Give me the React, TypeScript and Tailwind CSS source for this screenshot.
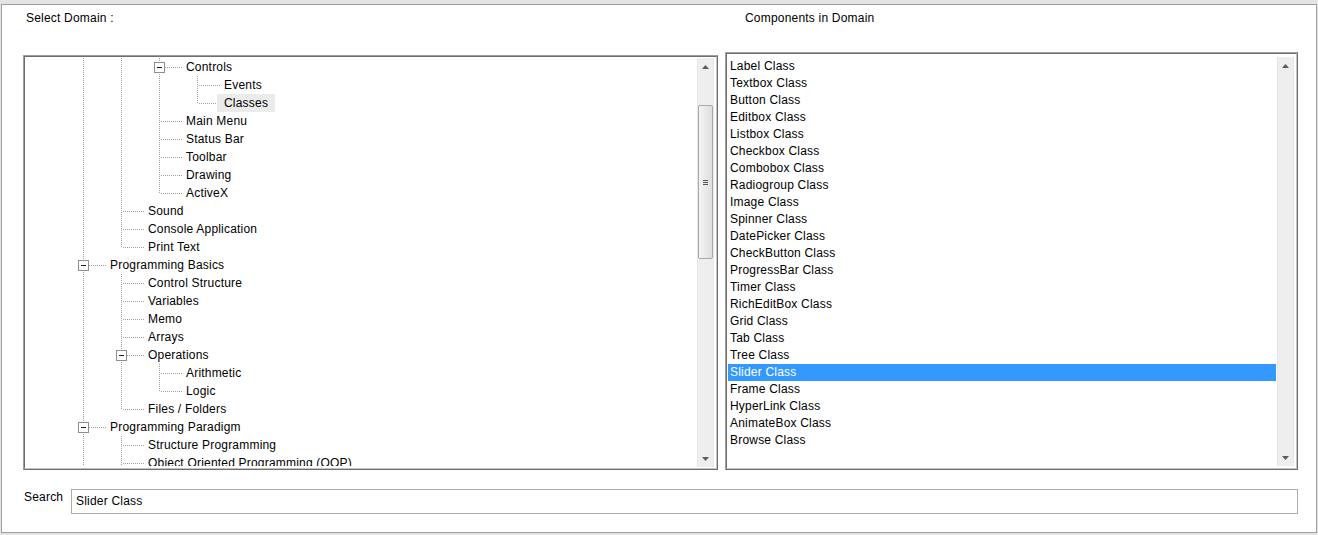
import React from "react";

type TreeRow = {
  text: string;
  conn: number;
  anc: boolean[];
  last?: boolean;
  box?: boolean;
  sel?: boolean;
};

const F = [true];
const FF = [true, true];
const FFF = [true, true, true];

const treeRows: TreeRow[] = [
  { text: "Controls", conn: 2, anc: FF, box: true },
  { text: "Events", conn: 3, anc: FFF },
  { text: "Classes", conn: 3, anc: FFF, last: true, sel: true },
  { text: "Main Menu", conn: 2, anc: FF },
  { text: "Status Bar", conn: 2, anc: FF },
  { text: "Toolbar", conn: 2, anc: FF },
  { text: "Drawing", conn: 2, anc: FF },
  { text: "ActiveX", conn: 2, anc: FF, last: true },
  { text: "Sound", conn: 1, anc: F },
  { text: "Console Application", conn: 1, anc: F },
  { text: "Print Text", conn: 1, anc: F, last: true },
  { text: "Programming Basics", conn: 0, anc: [], box: true },
  { text: "Control Structure", conn: 1, anc: F },
  { text: "Variables", conn: 1, anc: F },
  { text: "Memo", conn: 1, anc: F },
  { text: "Arrays", conn: 1, anc: F },
  { text: "Operations", conn: 1, anc: F, box: true },
  { text: "Arithmetic", conn: 2, anc: FF },
  { text: "Logic", conn: 2, anc: FF, last: true },
  { text: "Files / Folders", conn: 1, anc: F, last: true },
  { text: "Programming Paradigm", conn: 0, anc: [], box: true },
  { text: "Structure Programming", conn: 1, anc: F },
  { text: "Object Oriented Programming (OOP)", conn: 1, anc: F },
];

const listItems = [
  "Label Class",
  "Textbox Class",
  "Button Class",
  "Editbox Class",
  "Listbox Class",
  "Checkbox Class",
  "Combobox Class",
  "Radiogroup Class",
  "Image Class",
  "Spinner Class",
  "DatePicker Class",
  "CheckButton Class",
  "ProgressBar Class",
  "Timer Class",
  "RichEditBox Class",
  "Grid Class",
  "Tab Class",
  "Tree Class",
  "Slider Class",
  "Frame Class",
  "HyperLink Class",
  "AnimateBox Class",
  "Browse Class",
];

const DOT = "#a0a0a0";

function Guides({ row }: { row: TreeRow }) {
  const w = (row.conn + 1) * 38;
  const xc = 19 + 38 * row.conn;
  return (
    <svg
      width={w}
      height={18}
      className="shrink-0 overflow-visible"
      shapeRendering="crispEdges"
    >
      {row.anc.map((full, i) =>
        full ? (
          <line
            key={i}
            x1={19.5 + 38 * i}
            y1={0}
            x2={19.5 + 38 * i}
            y2={18}
            stroke={DOT}
            strokeDasharray="1 1"
          />
        ) : null
      )}
      <line
        x1={xc + 0.5}
        y1={0}
        x2={xc + 0.5}
        y2={row.last ? 10 : 18}
        stroke={DOT}
        strokeDasharray="1 1"
      />
      <line
        x1={row.box ? xc + 6 : xc + 2}
        y1={9.5}
        x2={w + 4}
        y2={9.5}
        stroke={DOT}
        strokeDasharray="1 1"
      />
      {row.box && (
        <g>
          <rect
            x={xc - 5 + 0.5}
            y={4.5}
            width={10}
            height={10}
            fill="#ffffff"
            stroke="#8e8e8e"
          />
          <line x1={xc - 2} y1={9.5} x2={xc + 3} y2={9.5} stroke="#1a1a1a" />
        </g>
      )}
    </svg>
  );
}

function Arrow({ up }: { up: boolean }) {
  return (
    <svg width="7" height="4" viewBox="0 0 7 4">
      <polygon
        points={up ? "0,4 7,4 3.5,0" : "0,0 7,0 3.5,4"}
        fill="#5c5c5c"
      />
    </svg>
  );
}

function ScrollBar({ thumb }: { thumb: boolean }) {
  return (
    <div className="w-[17px] shrink-0 flex flex-col bg-[#eeeeee] border-l border-r border-[#e6e6e6]">
      <div className="h-[17px] flex items-center justify-center pt-[1px]">
        <Arrow up />
      </div>
      <div className="flex-1 flex flex-col items-center">
        {thumb && (
          <div className="mt-[30px] w-[15px] h-[154px] rounded-[2px] border border-[#a9a9a9] bg-gradient-to-r from-[#f5f5f5] to-[#dedede] flex flex-col items-center justify-center gap-[1px]">
            <div className="w-[5px] h-[1px] bg-[#555555]" />
            <div className="w-[5px] h-[1px] bg-[#555555]" />
            <div className="w-[5px] h-[1px] bg-[#555555]" />
          </div>
        )}
      </div>
      <div className="h-[17px] flex items-center justify-center">
        <Arrow up={false} />
      </div>
    </div>
  );
}

function Frame({ children, h }: { children: React.ReactNode; h: string }) {
  return (
    <div
      className={`${h} border border-t-[#a0a0a0] border-l-[#a0a0a0] border-r-[#6e6e6e] border-b-[#6e6e6e]`}
    >
      <div className="h-full border border-t-[#6e6e6e] border-l-[#6e6e6e] border-r-[#c4c4c4] border-b-[#c4c4c4] bg-white">
        {children}
      </div>
    </div>
  );
}

export default function App() {
  return (
    <div className="w-[1318px] h-[535px] bg-[#e4e4e4] pt-[4px] pl-[1px] pr-[1px] pb-[2px] font-['Liberation_Sans',Arial,sans-serif] text-[12px] tracking-[0.2px] text-black overflow-hidden">
      <div className="h-full border border-[#a0a0a0] bg-white flex flex-col">
        <div className="flex pl-[21px] pt-[6px]">
          <div className="w-[695px] flex flex-col">
            <div className="pl-[3px] h-[14px] leading-[14px]">Select Domain :</div>
            <div className="mt-[30px]">
              <Frame h="h-[415px]">
                <div className="h-full flex pr-[2px]">
                  <div className="flex-1 pt-[1px] pb-[2px] flex flex-col">
                    <div className="flex-1 overflow-hidden">
                      {treeRows.map((r) => (
                        <div key={r.text} className="flex h-[18px] items-center">
                          <div className="w-[39px] shrink-0" />
                          <Guides row={r} />
                          <span
                            className={`ml-[1px] px-[7px] h-[18px] leading-[18px] whitespace-nowrap ${
                              r.sel ? "bg-[#ebebeb]" : ""
                            }`}
                          >
                            {r.text}
                          </span>
                        </div>
                      ))}
                    </div>
                  </div>
                  <div className="py-[1px] flex">
                    <ScrollBar thumb />
                  </div>
                </div>
              </Frame>
            </div>
          </div>
          <div className="w-[7px] shrink-0" />
          <div className="w-[573px] flex flex-col">
            <div className="pl-[20px] h-[14px] leading-[14px]">Components in Domain</div>
            <div className="mt-[27px]">
              <Frame h="h-[418px]">
                <div className="h-full flex pt-[3px] pl-[1px] pr-[2px] pb-[2px]">
                  <div className="flex-1 overflow-hidden pt-[1px] pr-[1px]">
                    {listItems.map((t) => (
                      <div
                        key={t}
                        className={`h-[17px] leading-[17px] pl-[2px] whitespace-nowrap ${
                          t === "Slider Class" ? "bg-[#3399ff] text-white" : ""
                        }`}
                      >
                        {t}
                      </div>
                    ))}
                  </div>
                  <ScrollBar thumb={false} />
                </div>
              </Frame>
            </div>
          </div>
        </div>
        <div className="flex items-start pl-[22px] mt-[19px]">
          <div className="w-[47px] shrink-0 mt-[1px] h-[14px] leading-[14px]">Search</div>
          <div className="w-[1227px] h-[25px] border border-[#adadad] pl-[4px] leading-[23px]">
            Slider Class
          </div>
        </div>
      </div>
    </div>
  );
}
